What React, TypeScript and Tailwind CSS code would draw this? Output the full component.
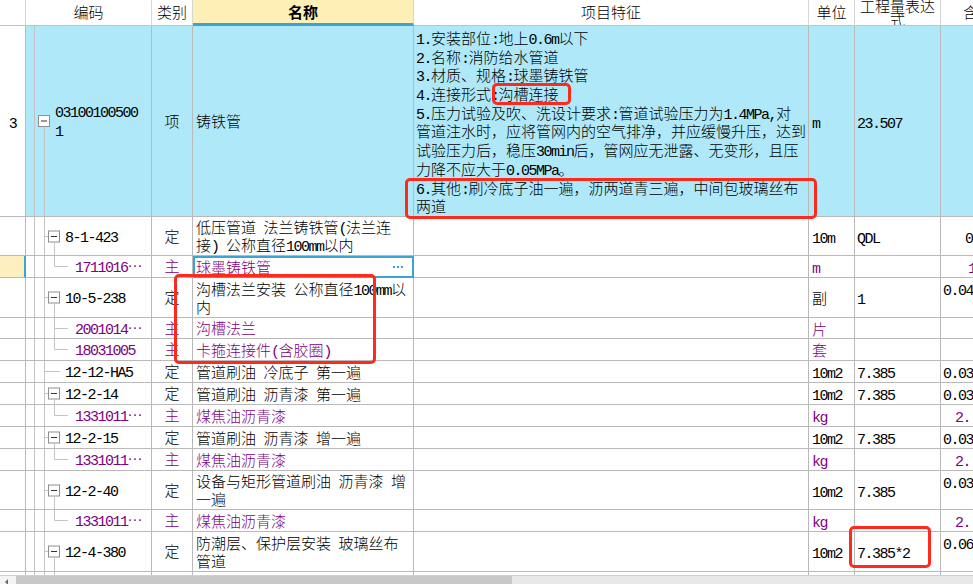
import React from "react";

type Kind = "root" | "parent" | "leaf1" | "child" | "childLast" | "empty";

type RowData = {
  h: number;
  kind: Kind;
  num?: string;
  code: string[];
  cat?: string;
  name: string[];
  feature?: string[];
  unit?: string;
  qty?: string;
  amt?: string;
  amtPl?: string;
  amtTop?: boolean;
  purple?: boolean;
  selected?: boolean;
};

const rows: RowData[] = [
  {
    h: 191,
    kind: "root",
    num: "3",
    code: ["03100100500", "1"],
    cat: "项",
    name: ["铸铁管"],
    feature: [
      "1.安装部位:地上0.6m以下",
      "2.名称:消防给水管道",
      "3.材质、规格:球墨铸铁管",
      "4.连接形式:沟槽连接",
      "5.压力试验及吹、洗设计要求:管道试验压力为1.4MPa,对",
      "管道注水时，应将管网内的空气排净，并应缓慢升压，达到",
      "试验压力后，稳压30min后，管网应无泄露、无变形，且压",
      "力降不应大于0.05MPa。",
      "6.其他:刷冷底子油一遍，沥两道青三遍，中间包玻璃丝布",
      "两道",
    ],
    unit: "m",
    qty: "23.507",
  },
  {
    h: 39,
    kind: "parent",
    code: ["8-1-423"],
    cat: "定",
    name: ["低压管道 法兰铸铁管(法兰连", "接) 公称直径100mm以内"],
    unit: "10m",
    qty: "QDL",
    amt: "0",
    amtPl: "pl-[24px]",
  },
  {
    h: 22,
    kind: "childLast",
    code: ["1711016…"],
    cat: "主",
    name: ["球墨铸铁管"],
    unit: "m",
    amt: "1",
    amtPl: "pl-[27px]",
    purple: true,
    selected: true,
  },
  {
    h: 40,
    kind: "parent",
    code: ["10-5-238"],
    cat: "定",
    name: ["沟槽法兰安装 公称直径100mm以", "内"],
    unit: "副",
    qty: "1",
    amt: "0.04",
    amtPl: "pl-[2px]",
    amtTop: true,
  },
  {
    h: 21,
    kind: "child",
    code: ["2001014…"],
    cat: "主",
    name: ["沟槽法兰"],
    unit: "片",
    purple: true,
  },
  {
    h: 22,
    kind: "childLast",
    code: ["18031005"],
    cat: "主",
    name: ["卡箍连接件(含胶圈)"],
    unit: "套",
    purple: true,
  },
  {
    h: 22,
    kind: "leaf1",
    code: ["12-12-HA5"],
    cat: "定",
    name: ["管道刷油 冷底子 第一遍"],
    unit: "10m2",
    qty: "7.385",
    amt: "0.03",
    amtPl: "pl-[2px]",
  },
  {
    h: 22,
    kind: "parent",
    code: ["12-2-14"],
    cat: "定",
    name: ["管道刷油 沥青漆 第一遍"],
    unit: "10m2",
    qty: "7.385",
    amt: "0.03",
    amtPl: "pl-[2px]",
  },
  {
    h: 22,
    kind: "childLast",
    code: ["1331011…"],
    cat: "主",
    name: ["煤焦油沥青漆"],
    unit: "kg",
    amt: "2.",
    amtPl: "pl-[14px]",
    purple: true,
  },
  {
    h: 22,
    kind: "parent",
    code: ["12-2-15"],
    cat: "定",
    name: ["管道刷油 沥青漆 增一遍"],
    unit: "10m2",
    qty: "7.385",
    amt: "0.03",
    amtPl: "pl-[2px]",
  },
  {
    h: 22,
    kind: "childLast",
    code: ["1331011…"],
    cat: "主",
    name: ["煤焦油沥青漆"],
    unit: "kg",
    amt: "2.",
    amtPl: "pl-[14px]",
    purple: true,
  },
  {
    h: 39,
    kind: "parent",
    code: ["12-2-40"],
    cat: "定",
    name: ["设备与矩形管道刷油 沥青漆 增", "一遍"],
    unit: "10m2",
    qty: "7.385",
    amt: "0.03",
    amtPl: "pl-[2px]",
    amtTop: true,
  },
  {
    h: 22,
    kind: "childLast",
    code: ["1331011…"],
    cat: "主",
    name: ["煤焦油沥青漆"],
    unit: "kg",
    amt: "2.",
    amtPl: "pl-[14px]",
    purple: true,
  },
  {
    h: 40,
    kind: "parent",
    code: ["12-4-380"],
    cat: "定",
    name: ["防潮层、保护层安装 玻璃丝布", "管道"],
    unit: "10m2",
    qty: "7.385*2",
    amt: "0.06",
    amtPl: "pl-[2px]",
    amtTop: true,
  },
  {
    h: 22,
    kind: "empty",
    code: [],
    name: [],
  },
];

const HCLS: Record<number, string> = {
  191: "h-[191px]",
  39: "h-[39px]",
  40: "h-[40px]",
  22: "h-[22px]",
  21: "h-[21px]",
};

const LINE = "#c4c4c4";
const BOX = "#8e8e8e";

/* Mixed text: ASCII runs are set in a monospace face so that they take
   half the width of a CJK character, as in the original grid font. */
function T({ s }: { s?: string }) {
  if (!s) return null;
  const parts = s.split(/([\x20-\x7e]+)/).filter((p) => p.length > 0);
  return (
    <>
      {parts.map((p, i) =>
        /^[\x20-\x7e]+$/.test(p) ? (
          <span key={i} className="font-['Liberation_Mono',monospace] tracking-[-1.5px] whitespace-pre">
            {p}
          </span>
        ) : (
          <span key={i}>{p}</span>
        )
      )}
    </>
  );
}

function One({ s, cls }: { s?: string; cls?: string }) {
  return (
    <div className={`h-[19px] leading-[19px] whitespace-nowrap ${cls ?? ""}`}>
      <T s={s} />
    </div>
  );
}

function Tree({ kind, h }: { kind: Kind; h: number }) {
  const ch = h - 1;
  const cy = Math.floor(ch / 2) + 0.5;
  const w = kind === "root" ? 27 : kind === "child" || kind === "childLast" || kind === "empty" ? 47 : 37;
  return (
    <svg width={w} height={ch} className="shrink-0 block">
      <line x1={8.5} y1={0} x2={8.5} y2={ch} stroke={LINE} strokeWidth={1} />
      {kind === "root" ? (
        <g>
          <rect x={12.5} y={cy - 6} width={11} height={11} fill="#fff" stroke={BOX} strokeWidth={1} />
          <line x1={15} y1={cy - 0.5} x2={21} y2={cy - 0.5} stroke="#333" strokeWidth={1} />
          <line x1={18.5} y1={cy + 5} x2={18.5} y2={ch} stroke={LINE} strokeWidth={1} />
        </g>
      ) : (
        <line x1={18.5} y1={0} x2={18.5} y2={ch} stroke={LINE} strokeWidth={1} />
      )}
      {kind === "parent" && (
        <g>
          <line x1={18.5} y1={cy} x2={22} y2={cy} stroke={LINE} strokeWidth={1} />
          <rect x={22.5} y={cy - 5.5} width={11} height={11} fill="#fff" stroke={BOX} strokeWidth={1} />
          <line x1={25} y1={cy} x2={31} y2={cy} stroke="#333" strokeWidth={1} />
          <line x1={28.5} y1={cy + 5.5} x2={28.5} y2={ch} stroke={LINE} strokeWidth={1} />
        </g>
      )}
      {kind === "leaf1" && <line x1={18.5} y1={cy} x2={34} y2={cy} stroke={LINE} strokeWidth={1} />}
      {(kind === "child" || kind === "childLast") && (
        <g>
          <line x1={28.5} y1={0} x2={28.5} y2={kind === "child" ? ch : cy} stroke={LINE} strokeWidth={1} />
          <line x1={28.5} y1={cy} x2={42} y2={cy} stroke={LINE} strokeWidth={1} />
        </g>
      )}
      {kind === "empty" && <line x1={28.5} y1={0} x2={28.5} y2={ch} stroke={LINE} strokeWidth={1} />}
    </svg>
  );
}

function Lines({ lines, tall }: { lines: string[]; tall?: boolean }) {
  const lh = tall ? "h-[18.7px] leading-[18.7px]" : "h-[18px] leading-[18px]";
  return (
    <div className="flex flex-col">
      {lines.map((l, i) => (
        <div key={i} className={`whitespace-nowrap ${lh}`}>
          <T s={l} />
        </div>
      ))}
    </div>
  );
}

function Row({ r }: { r: RowData }) {
  const ink = r.purple ? "text-[#800080]" : "text-black";
  const bg = r.kind === "root" ? "bg-[#aee8f9]" : "bg-white";
  const bd = "border-[#b9b9b9]";
  return (
    <div className={`flex shrink-0 ${HCLS[r.h]} ${ink}`}>
      {r.selected ? (
        <div className="w-[26px] shrink-0 bg-[#fdefbf] border-b border-b-[#b9b9b9] border-r-2 border-r-[#3ca4d4]" />
      ) : (
        <div className={`w-[26px] shrink-0 bg-white border-r border-b ${bd} flex items-center justify-center text-black`}>
          {r.num && <One s={r.num} />}
        </div>
      )}
      <div className={`w-[126px] shrink-0 border-r border-b ${bd} ${bg} flex overflow-hidden`}>
        <Tree kind={r.kind} h={r.h} />
        <div className="flex items-center pl-[2px]">
          <Lines lines={r.code} tall />
        </div>
      </div>
      <div className={`w-[41px] shrink-0 border-r border-b ${bd} ${bg} flex items-center justify-center`}>{r.cat}</div>
      {r.selected ? (
        <div className="w-[221px] shrink-0 border-2 border-[#3ca4d4] bg-white flex items-center justify-between pl-[1px] pr-[9px]">
          <span className="whitespace-nowrap">{r.name[0]}</span>
          <svg width="10" height="3" className="block">
            <rect x="0" y="0" width="2" height="2" fill="#3ca4d4" />
            <rect x="4" y="0" width="2" height="2" fill="#3ca4d4" />
            <rect x="8" y="0" width="2" height="2" fill="#3ca4d4" />
          </svg>
        </div>
      ) : (
        <div className={`w-[221px] shrink-0 border-r border-b ${bd} ${bg} flex items-center pl-[3px] overflow-hidden`}>
          <Lines lines={r.name} />
        </div>
      )}
      <div className={`w-[395px] shrink-0 border-r border-b ${bd} ${bg} pl-[2px] pt-[3px] overflow-hidden`}>
        {r.feature && <Lines lines={r.feature} tall />}
      </div>
      <div className={`w-[46px] shrink-0 border-r border-b ${bd} ${bg} flex items-center pl-[3px] overflow-hidden`}>
        {r.unit && <One s={r.unit} />}
      </div>
      <div className={`w-[86px] shrink-0 border-r border-b ${bd} ${bg} flex items-center pl-[2px] overflow-hidden`}>
        {r.qty && <One s={r.qty} />}
      </div>
      <div
        className={`flex-1 min-w-0 border-b ${bd} ${bg} flex ${r.amtTop ? "items-start pt-[1px]" : "items-center"} ${r.amtPl ?? ""} overflow-hidden`}
      >
        {r.amt && <One s={r.amt} />}
      </div>
    </div>
  );
}

function Header() {
  const c = "shrink-0 border-r border-b border-r-[#d6d6d6] border-b-[#c2c2c2] flex items-center justify-center bg-white";
  return (
    <div className="flex h-[26px] shrink-0 text-black">
      <div className={`w-[26px] ${c}`} />
      <div className={`w-[126px] ${c}`}>编码</div>
      <div className={`w-[41px] ${c}`}>类别</div>
      <div className="w-[221px] shrink-0 border-r border-r-[#d6d6d6] border-b-[3px] border-b-[#3ba3d3] bg-[#fdefb6] flex items-center justify-center font-bold pt-[2px]">
        名称
      </div>
      <div className={`w-[395px] ${c}`}>项目特征</div>
      <div className={`w-[46px] ${c}`}>单位</div>
      <div className={`w-[86px] ${c} overflow-hidden`}>
        <div className="flex flex-col items-center leading-[14px] whitespace-nowrap">
          <span>工程量表达</span>
          <span>式</span>
        </div>
      </div>
      <div className="flex-1 min-w-0 border-b border-b-[#c2c2c2] bg-white flex items-center pl-[22px] whitespace-nowrap overflow-hidden">
        含量
      </div>
    </div>
  );
}

function RedBox({ cls }: { cls: string }) {
  return <div className={`absolute pointer-events-none border-[3px] border-[#fe2a1c] rounded-[5px] ${cls}`} />;
}

export default function App() {
  return (
    <div className="relative w-[973px] h-[584px] overflow-hidden bg-white flex flex-col text-[15px] font-light font-['Noto_Sans_CJK_SC',sans-serif]">
      <Header />
      <div className="flex-1 min-h-0 overflow-hidden flex flex-col">
        {rows.map((r, i) => (
          <Row key={i} r={r} />
        ))}
      </div>
      <div className="h-[9px] shrink-0 bg-[#e7e7e7] flex border-t border-t-[#d0d0d0]">
        <div className="w-[16px] shrink-0 bg-[#f4f4f4] flex items-start pl-[5px] pt-[3px]">
          <div className="w-0 h-0 border-y-[3px] border-y-transparent border-r-[3px] border-r-[#6a6a6a]" />
        </div>
        <div className="w-[496px] shrink-0 bg-[#c8c8c8]" />
      </div>
      <RedBox cls="left-[492px] top-[83px] w-[79px] h-[22px]" />
      <RedBox cls="left-[405px] top-[178px] w-[412px] h-[41px]" />
      <RedBox cls="left-[174px] top-[274px] w-[202px] h-[90px]" />
      <RedBox cls="left-[849px] top-[526px] w-[82px] h-[42px]" />
    </div>
  );
}
